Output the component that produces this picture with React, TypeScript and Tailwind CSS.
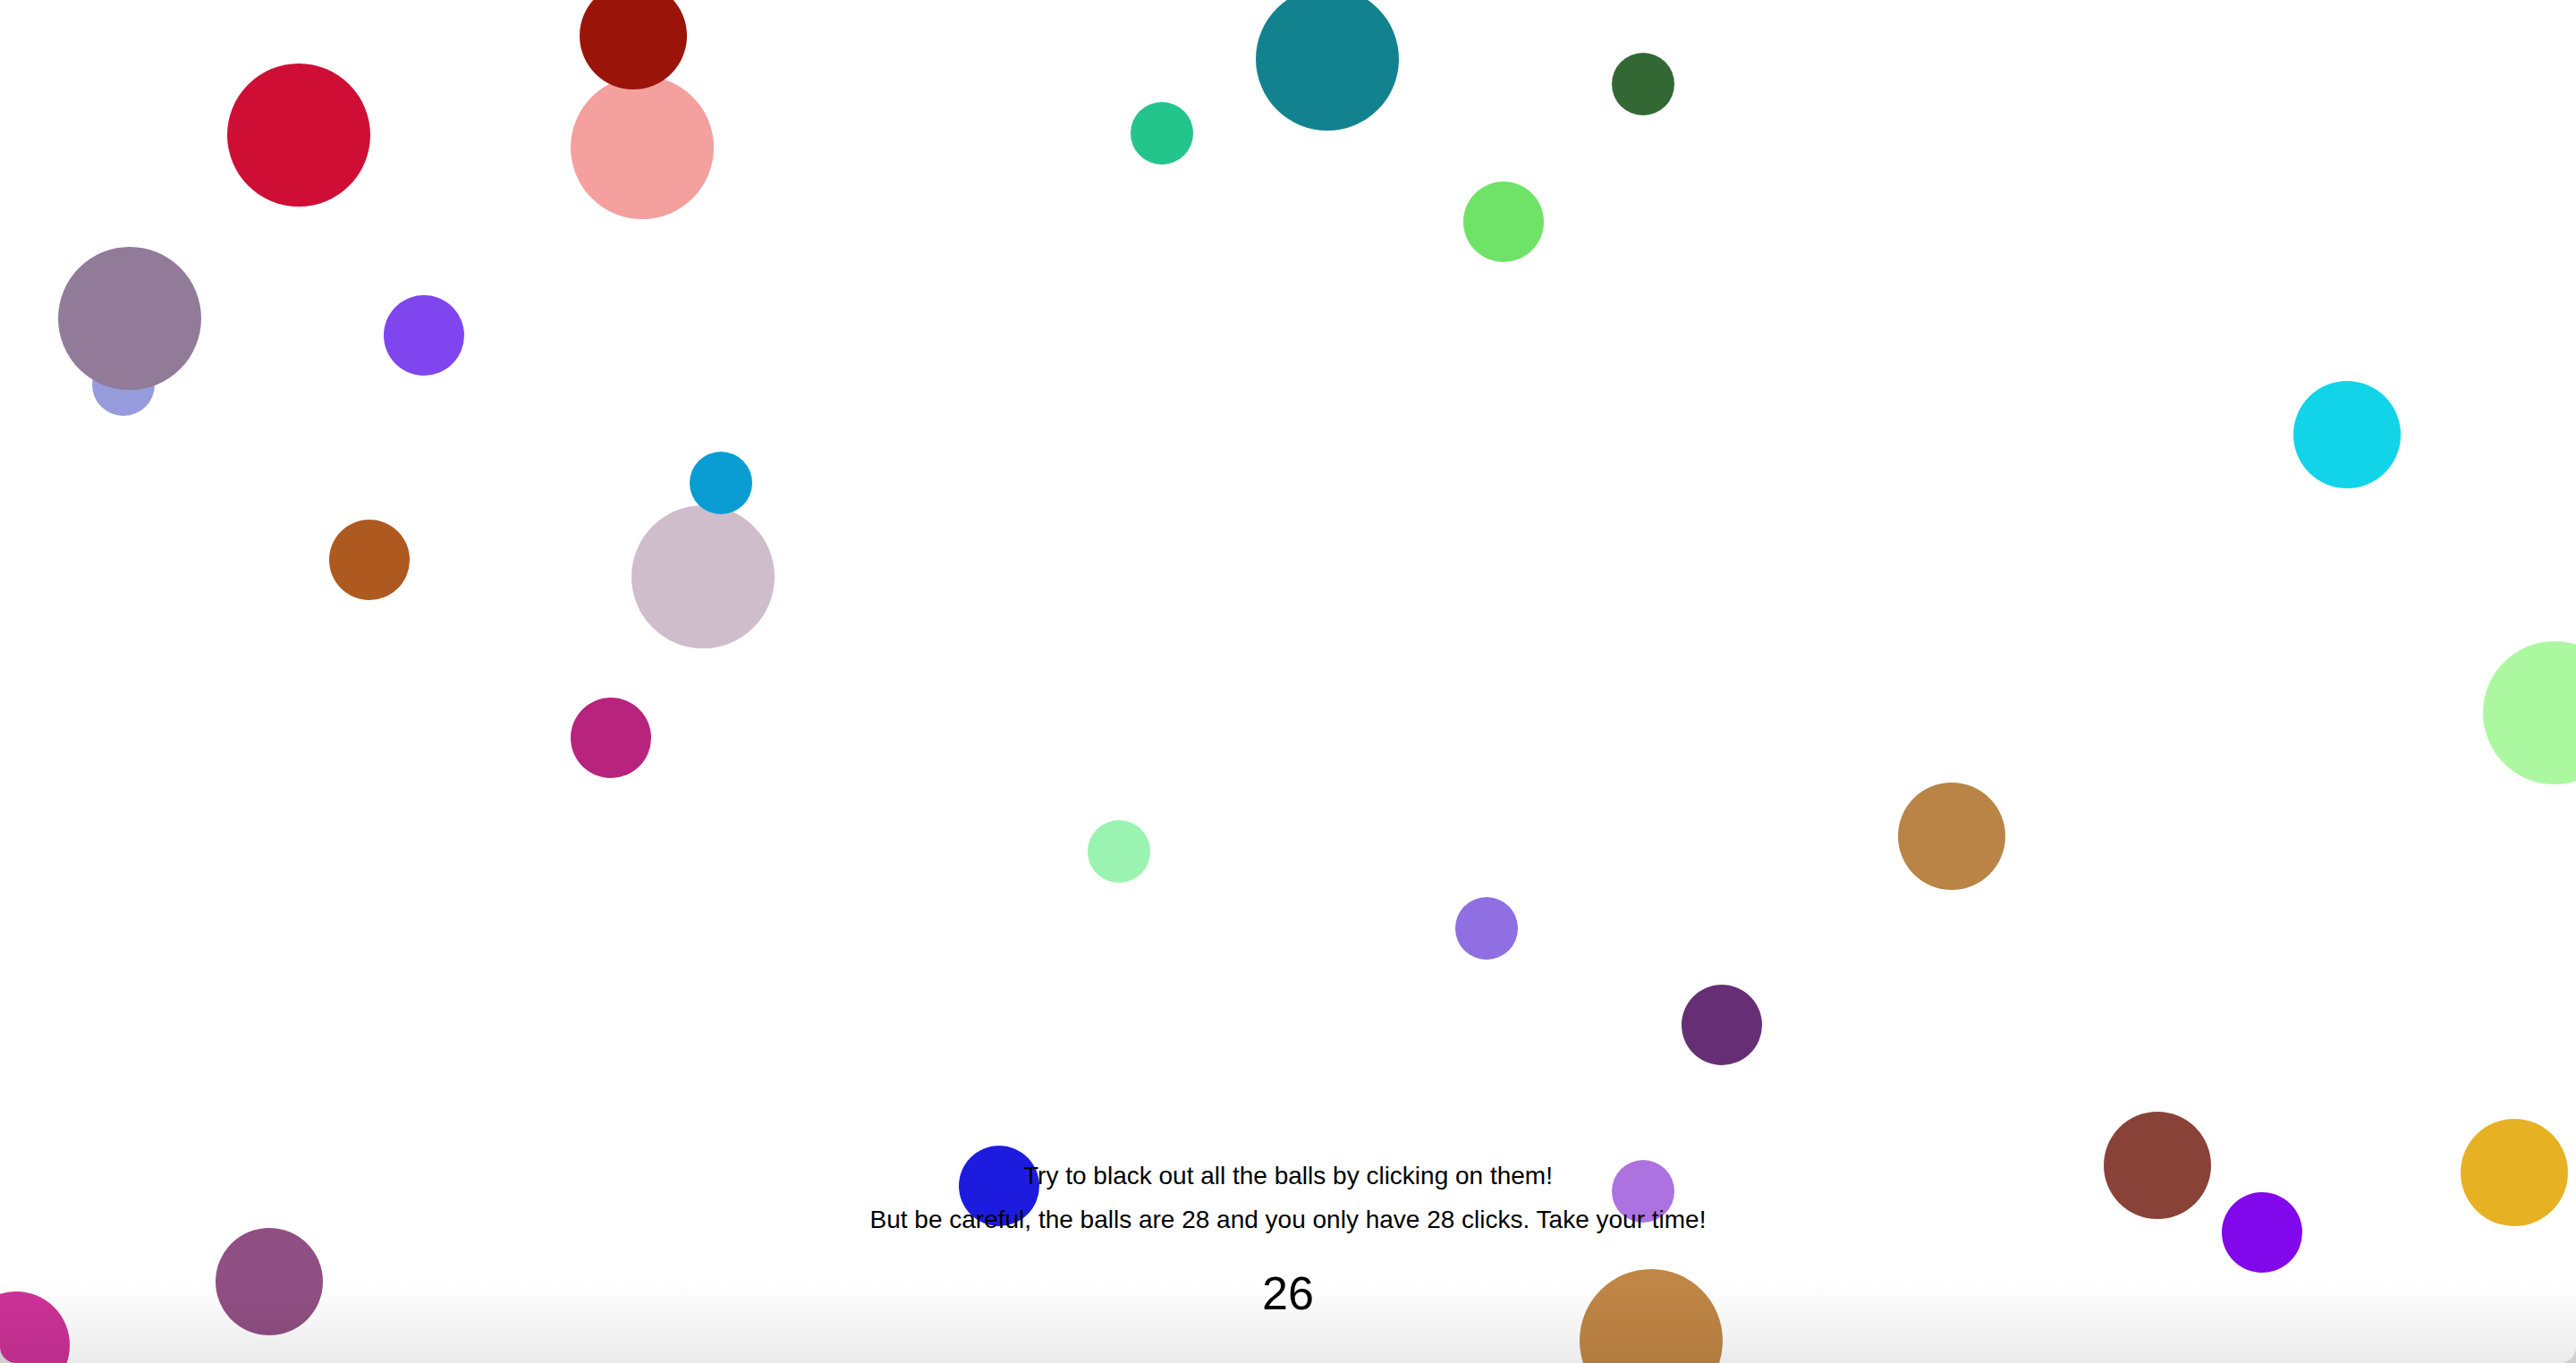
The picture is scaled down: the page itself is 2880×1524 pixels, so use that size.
import React from "react";

interface Ball {
  x: number;
  y: number;
  d: number;
  color: string;
}

// center x, center y, diameter
const balls: Ball[] = [
  { x: 718, y: 165, d: 160, color: "#f4a09e" },
  { x: 708, y: 40, d: 120, color: "#9b140a" },
  { x: 334, y: 151, d: 160, color: "#cf0e36" },
  { x: 1484, y: 66, d: 160, color: "#12828f" },
  { x: 1299, y: 149, d: 70, color: "#24c48d" },
  { x: 1837, y: 94, d: 70, color: "#336835" },
  { x: 1681, y: 248, d: 90, color: "#6fe368" },
  { x: 138, y: 430, d: 70, color: "#959bdb" },
  { x: 145, y: 356, d: 160, color: "#927a99" },
  { x: 474, y: 375, d: 90, color: "#7f46ef" },
  { x: 2624, y: 486, d: 120, color: "#12d4e9" },
  { x: 786, y: 645, d: 160, color: "#cfbdcb" },
  { x: 806, y: 540, d: 70, color: "#0a9dd3" },
  { x: 413, y: 626, d: 90, color: "#ad5920" },
  { x: 2856, y: 797, d: 160, color: "#abf8a1" },
  { x: 683, y: 825, d: 90, color: "#b8237e" },
  { x: 1251, y: 952, d: 70, color: "#9bf3b1" },
  { x: 2182, y: 935, d: 120, color: "#b98445" },
  { x: 1662, y: 1038, d: 70, color: "#8f6fe2" },
  { x: 1925, y: 1146, d: 90, color: "#662f75" },
  { x: 1117, y: 1326, d: 90, color: "#1d1cde" },
  { x: 1837, y: 1332, d: 70, color: "#ac73e0" },
  { x: 2412, y: 1303, d: 120, color: "#894237" },
  { x: 2529, y: 1378, d: 90, color: "#8108ea" },
  { x: 2811, y: 1311, d: 120, color: "#e7b124" },
  { x: 301, y: 1433, d: 120, color: "#904f83" },
  { x: 18, y: 1504, d: 120, color: "#cc3296" },
  { x: 1846, y: 1499, d: 160, color: "#c08645" },
];

const App: React.FC = () => {
  return (
    <div className="w-full h-[1524px] bg-[#cfcfcf]">
      <div
        className="relative w-full h-full overflow-hidden bg-white rounded-b-[18px] flex flex-col items-center justify-end pb-[48px] text-black"
        style={{ fontFamily: '"Liberation Sans", Arial, Helvetica, sans-serif' }}
      >
        {balls.map((ball, i) => (
          <div
            key={i}
            className="absolute rounded-full cursor-pointer"
            style={{
              left: ball.x - ball.d / 2,
              top: ball.y - ball.d / 2,
              width: ball.d,
              height: ball.d,
              backgroundColor: ball.color,
            }}
          />
        ))}

        <div className="relative z-10 flex flex-col items-center">
          <p className="text-[28px] leading-[49px]">Try to black out all the balls by clicking on them!</p>
          <p className="text-[28px] leading-[49px]">
            But be careful, the balls are 28 and you only have 28 clicks. Take your time!
          </p>
          <div className="mt-[28px] text-[52px] leading-[60px]">26</div>
        </div>

        <div className="pointer-events-none absolute inset-x-0 bottom-0 z-20 h-[90px] bg-gradient-to-b from-transparent to-black/[0.08]" />
      </div>
    </div>
  );
};

export default App;
